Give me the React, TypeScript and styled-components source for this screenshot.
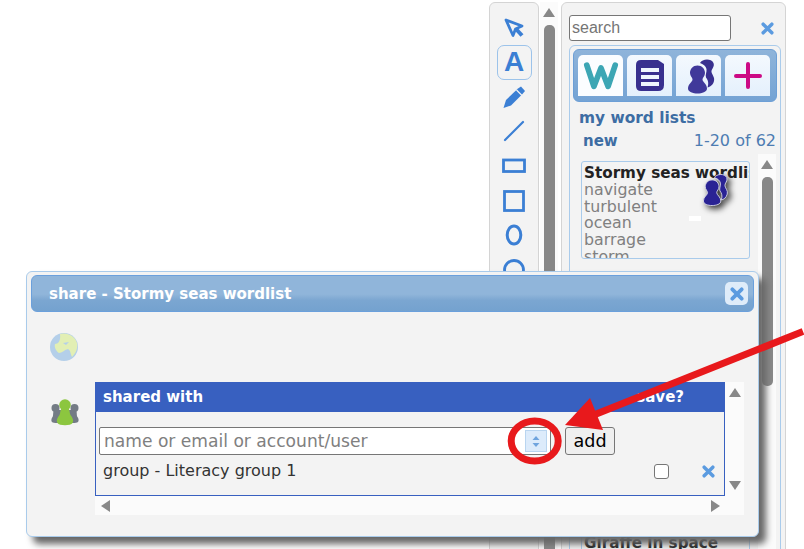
import React from "react";
import styled, { createGlobalStyle } from "styled-components";

const Global = createGlobalStyle`
  html, body { margin: 0; padding: 0; background: #fff; }
  body { font-family: "DejaVu Sans", sans-serif; }
`;

const Page = styled.div`
  position: relative;
  width: 804px;
  height: 549px;
  overflow: hidden;
  background: #fff;
  display: flex;
  padding: 2px 18px 0 489px;
  box-sizing: border-box;
`;

const ToolBox = styled.div`
  width: 50px;
  flex: none;
  height: 600px;
  box-sizing: border-box;
  border: 1px solid #d4d4d4;
  border-radius: 6px;
  background: #f3f3f3;
  padding-top: 7px;
  display: flex;
  flex-direction: column;
  align-items: center;
`;

const Tool = styled.div<{ $active?: boolean }>`
  width: 35px;
  height: 35px;
  flex: none;
  margin-bottom: -0.4px;
  box-sizing: border-box;
  display: flex;
  align-items: center;
  justify-content: center;
  border-radius: 7px;
  border: 1px solid ${(p) => (p.$active ? "#9cc3ea" : "transparent")};
  color: #3b7fd4;
`;

const TextTool = styled.span`
  font: 700 28px/1 "Liberation Sans", Arial, sans-serif;
  color: #3b7fd4;
`;

const VScroll = styled.div<{ $w?: number; $thumbTop: number; $thumbH: number; $pad?: number }>`
  position: relative;
  width: ${(p) => p.$w ?? 18}px;
  flex: none;
  background: #fbfbfb;
  margin-left: ${(p) => p.$pad ?? 1}px;
  &::before {
    content: "";
    position: absolute;
    left: 50%;
    margin-left: -6px;
    top: ${(p) => p.$thumbTop - 17}px;
    border: 6px solid transparent;
    border-top: 0;
    border-bottom: 9px solid #888;
  }
  &::after {
    content: "";
    position: absolute;
    left: 50%;
    margin-left: -5.5px;
    width: 11px;
    top: ${(p) => p.$thumbTop}px;
    height: ${(p) => p.$thumbH}px;
    background: #888;
    border-radius: 5px;
  }
`;

const Panel = styled.div`
  width: 225px;
  flex: none;
  margin-left: 3px;
  height: 600px;
  box-sizing: border-box;
  border: 1px solid #d4d4d4;
  border-radius: 6px 6px 0 0;
  background: #f3f3f3;
  padding: 12px 4px 0 7px;
`;

const SearchRow = styled.div`
  display: flex;
  align-items: center;
  height: 26px;
  margin-bottom: 4px;
`;

const SearchInput = styled.input`
  width: 162px;
  height: 26px;
  box-sizing: border-box;
  border: 1px solid #767676;
  border-radius: 3px;
  background: #fff;
  font: 16px "Liberation Sans", Arial, sans-serif;
  padding: 0 2px;
  &::placeholder { color: #757575; opacity: 1; }
`;

const SearchClear = styled.span`
  display: flex;
  margin-left: 30px;
`;

const Inner = styled.div`
  border: 1px solid #a9cbeb;
  border-radius: 6px 6px 0 0;
  height: 560px;
  box-sizing: border-box;
  padding: 3px 3px 0;
`;

const TabBar = styled.div`
  height: 53px;
  box-sizing: border-box;
  border-radius: 6px;
  background: linear-gradient(#8fb4da, #74a3d4);
  border: 1px solid #6d9fd6;
  display: flex;
  gap: 4px;
  padding: 5px 6px 5px 4px;
`;

const Tab = styled.div<{ $active?: boolean }>`
  flex: 1;
  height: 41px;
  border-radius: 5px 5px 0 0;
  background: ${(p) => (p.$active ? "#fbfdff" : "linear-gradient(#f4f9fe, #e4f0fc)")};
  display: flex;
  align-items: center;
  justify-content: center;
`;

const ListTitle = styled.div`
  font-weight: 700;
  font-size: 15.4px;
  line-height: 18px;
  color: #3d6da3;
  margin: 7px 0 0 6px;
`;

const NewRow = styled.div`
  display: flex;
  justify-content: space-between;
  align-items: baseline;
  margin: 5px 1px 0 10px;
  line-height: 18px;
`;

const NewLink = styled.span`
  font-weight: 700;
  font-size: 15px;
  color: #3d6da3;
`;

const Count = styled.span`
  font-size: 16px;
  color: #4d7cb2;
`;

const ListArea = styled.div`
  display: flex;
  margin: 4px 0 0 8px;
`;

const Cards = styled.div`
  width: 169px;
  flex: none;
  margin-top: 7px;
`;

const Card = styled.div<{ $top?: number }>`
  position: relative;
  height: 98px;
  box-sizing: border-box;
  border: 1px solid #a9cbeb;
  border-radius: 3px;
  margin-top: ${(p) => p.$top ?? 0}px;
  padding-left: 2px;
  overflow: hidden;
`;

const CardTitle = styled.div`
  font-weight: 700;
  font-size: 15.2px;
  line-height: 18px;
  margin-top: 2px;
  color: #222;
  white-space: nowrap;
`;

const CardWord = styled.div`
  font-size: 15.8px;
  line-height: 16.7px;
  color: #808080;
`;

const CardBadge = styled.div`
  position: absolute;
  left: 115px;
  top: 11px;
  display: flex;
  filter: drop-shadow(3px 3px 3px #333);
`;

const Mark = styled.div`
  position: absolute;
  left: 107px;
  top: 54px;
  width: 12px;
  height: 5px;
  background: #fff;
`;

const Modal = styled.div`
  position: absolute;
  left: 26px;
  top: 271px;
  width: 733px;
  height: 266px;
  box-sizing: border-box;
  background: #f3f3f3;
  border: 1px solid #a9cbeb;
  border-radius: 6px;
  box-shadow: 7px 7px 7px #666;
  padding: 3px 4px 0 4px;
`;

const ModalHeader = styled.div`
  height: 37px;
  box-sizing: border-box;
  border: 1px solid #6ba0dc;
  border-radius: 6px;
  background: linear-gradient(#90b5da 0 52%, #7ba6d1 70%, #74a2cf);
  display: flex;
  align-items: center;
  justify-content: space-between;
  padding: 0 5px 0 17px;
  color: #fff;
  font-weight: 700;
  font-size: 15px;
`;

const CloseBtn = styled.div`
  width: 23px;
  height: 23px;
  border-radius: 5px;
  background: #dfecf9;
  display: flex;
  align-items: center;
  justify-content: center;
`;

const ModalBody = styled.div`
  display: flex;
  padding: 18px 0 0 18px;
`;

const IconCol = styled.div`
  width: 46px;
  flex: none;
  display: flex;
  flex-direction: column;
  gap: 36px;
  padding-top: 2px;
`;

const ShareArea = styled.div`
  display: grid;
  grid-template-columns: 630px 19px;
  grid-template-rows: 114px 19px;
  margin-top: 52px;
  background: #fbfbfb;
`;

const ShareBox = styled.div`
  border: 1px solid #3860c0;
  background: #f3f3f3;
  box-sizing: border-box;
`;

const ShareHead = styled.div`
  height: 29px;
  background: #3860c0;
  color: #fff;
  font-weight: 700;
  font-size: 15px;
  line-height: 29px;
  display: flex;
  justify-content: space-between;
  padding: 0 40px 0 7px;
`;

const AddRow = styled.div`
  display: flex;
  align-items: center;
  margin: 15px 0 0 3px;
  gap: 14px;
`;

const InputWrap = styled.div`
  position: relative;
  width: 452px;
  height: 28px;
`;

const NameInput = styled.input`
  width: 100%;
  height: 100%;
  box-sizing: border-box;
  border: 1px solid #767676;
  border-radius: 2px;
  background: #fff;
  font: 17.1px "DejaVu Sans", sans-serif;
  padding: 0 4px;
  &::placeholder { color: #808080; opacity: 1; }
`;

const Spinner = styled.div`
  position: absolute;
  right: 4px;
  top: 3px;
  width: 22px;
  height: 22px;
  box-sizing: border-box;
  background: #dcebfb;
  border: 1px solid #b9d5f0;
  display: flex;
  align-items: center;
  justify-content: center;
`;

const AddBtn = styled.button`
  width: 50px;
  height: 28px;
  box-sizing: border-box;
  border: 1px solid #767676;
  border-radius: 3px;
  background: #efefef;
  color: #000;
  font: 17.6px "DejaVu Sans", sans-serif;
  padding: 0;
`;

const ShareRow = styled.div`
  display: flex;
  align-items: center;
  margin: 5px 0 0 7px;
  height: 20px;
  font-size: 16px;
  color: #333;
`;

const RowName = styled.span`
  flex: 1;
`;

const Check = styled.input.attrs({ type: "checkbox" })`
  width: 15px;
  height: 15px;
  margin: 2px 33px 0 0;
  appearance: none;
  background: #fff;
  border: 1px solid #767676;
  border-radius: 3px;
`;

const RowClear = styled.span`
  display: flex;
  margin: 2px 9px 0 0;
`;

const SideBar = styled.div`
  display: flex;
  flex-direction: column;
  justify-content: space-between;
  align-items: center;
  padding: 6px 0 6px;
`;

const BottomBar = styled.div`
  display: flex;
  justify-content: space-between;
  align-items: center;
  padding: 0 5px 0 6px;
`;

const Annotation = styled.svg`
  position: absolute;
  left: 0;
  top: 0;
  pointer-events: none;
`;

const Xmark = ({ size = 13, color = "#5b9be0" }: { size?: number; color?: string }) => (
  <svg width={size} height={size} viewBox="0 0 12 12">
    <path d="M2 2 L10 10 M10 2 L2 10" stroke={color} strokeWidth="3.2" strokeLinecap="round" />
  </svg>
);

const People = ({ size = 36, back = "#38308f", front = "#40399a", edge = "none" }: { size?: number; back?: string; front?: string; edge?: string }) => (
  <svg width={size} height={size} viewBox="0 0 36 36">
    <path d="M19 5 C21 1 30 0 32.5 5 C34 9 30 11 30.5 14 C31 17 34 19 33 23 C32 27 29 29 26.5 29.5 C28 25 27 22 25 19.5 C24 17 26 14 25.5 11 C25 8 22 6 19 5 Z" fill={back} stroke={edge} />
    <path d="M16.5 7.5 C21 7.5 24 11 24 15 C24 18 21.5 19.5 21.5 21.5 C21.5 24 26 26 26 30.5 C26 34 21 35.5 16.5 35.5 C12 35.5 7 34 7 30.5 C7 26 11.5 24 11.5 21.5 C11.5 19.5 9 18 9 15 C9 11 12 7.5 16.5 7.5 Z" fill={front} stroke={edge} />
  </svg>
);

const Arrow = ({ dir }: { dir: "up" | "down" | "left" | "right" }) => {
  const pts = {
    up: "0,9 6,0 12,9",
    down: "0,0 12,0 6,9",
    left: "9,0 9,12 0,6",
    right: "0,0 0,12 9,6",
  }[dir];
  const w = dir === "up" || dir === "down" ? 12 : 9;
  const h = dir === "up" || dir === "down" ? 9 : 12;
  return (
    <svg width={w} height={h} viewBox={`0 0 ${w} ${h}`}>
      <polygon points={pts} fill="#888" />
    </svg>
  );
};

const toolIcons = [
  <svg key="c" width="22" height="22" viewBox="0 0 22 22" fill="none" stroke="currentColor" strokeLinejoin="round"><path d="M3 3 L19 9 L12.500 12 L10 18.500 Z" strokeWidth="2.800" /><path d="M13 12 L19 18.500" strokeWidth="4" /></svg>,
  <TextTool key="a">A</TextTool>,
  <svg key="p" width="24" height="24" viewBox="0 0 24 24"><path d="M1.500 23 L4 15 L16 3.500 L19 1.500 L23 6 L20.500 9 L9 20.500 Z" fill="currentColor" /><path d="M14.500 5 L20 10.500" stroke="#f3f3f3" strokeWidth="1.200" /></svg>,
  <svg key="l" width="22" height="22" viewBox="0 0 22 22"><path d="M2 20 L20 2" stroke="currentColor" strokeWidth="2.200" strokeLinecap="round" /></svg>,
  <svg key="r" width="24" height="16" viewBox="0 0 24 16" fill="none"><rect x="1.500" y="2" width="21" height="11.500" stroke="currentColor" strokeWidth="2.800" /></svg>,
  <svg key="s" width="22" height="22" viewBox="0 0 22 22" fill="none"><rect x="1.500" y="1.500" width="19" height="19" stroke="currentColor" strokeWidth="2.800" /></svg>,
  <svg key="e" width="18" height="22" viewBox="0 0 18 22" fill="none"><ellipse cx="9" cy="11" rx="6.800" ry="9" stroke="currentColor" strokeWidth="3" /></svg>,
  <svg key="o" width="22" height="22" viewBox="0 0 22 22" fill="none"><circle cx="11" cy="11" r="9.500" stroke="currentColor" strokeWidth="2.800" /></svg>,
];

export default function App() {
  return (
    <Page>
      <Global />
      <ToolBox>
        {toolIcons.map((icon, i) => (
          <Tool key={i} $active={i === 1}>{icon}</Tool>
        ))}
      </ToolBox>
      <VScroll $thumbTop={23} $thumbH={600} />
      <Panel>
        <SearchRow>
          <SearchInput placeholder="search" />
          <SearchClear><Xmark /></SearchClear>
        </SearchRow>
        <Inner>
          <TabBar>
            <Tab $active>
              <svg width="36" height="30" viewBox="0 0 38 30" fill="none"><path d="M4 3.500 L11.500 26 L19 6.500 L26.500 26 L34 3.500" stroke="#3ca6b4" strokeWidth="6" strokeLinecap="round" strokeLinejoin="round" /></svg>
            </Tab>
            <Tab>
              <svg width="28" height="31" viewBox="0 0 28 31"><path d="M5 0 H22 L28 4 V25 Q28 31 22 31 H5 Q0 31 0 26 V5 Q0 0 5 0Z" fill="#38308f" /><path d="M5 10 H23 M5 17 H23 M5 24 H23" stroke="#eef5fd" strokeWidth="4" /></svg>
            </Tab>
            <Tab><People /></Tab>
            <Tab>
              <svg width="28" height="28" viewBox="0 0 28 28"><path d="M14 2 V25 M2 14 H26" stroke="#cc0a85" strokeWidth="4" strokeLinecap="round" /></svg>
            </Tab>
          </TabBar>
          <ListTitle>my word lists</ListTitle>
          <NewRow>
            <NewLink>new</NewLink>
            <Count>1-20 of 62</Count>
          </NewRow>
          <ListArea>
            <Cards>
              <Card>
                <CardTitle>Stormy seas wordlist</CardTitle>
                <CardWord>navigate</CardWord>
                <CardWord>turbulent</CardWord>
                <CardWord>ocean</CardWord>
                <CardWord>barrage</CardWord>
                <CardWord>storm</CardWord>
                <CardBadge><People size={33} back="#2a2394" front="#2a2394" edge="#d8d8e8" /></CardBadge>
                <Mark />
              </Card>
              <Card $top={272}>
                <CardTitle>Giraffe in space</CardTitle>
              </Card>
            </Cards>
            <VScroll $thumbTop={23} $thumbH={209} $pad={8} />
          </ListArea>
        </Inner>
      </Panel>

      <Modal>
        <ModalHeader>
          share - Stormy seas wordlist
          <CloseBtn><Xmark size={14} /></CloseBtn>
        </ModalHeader>
        <ModalBody>
          <IconCol>
            <svg width="30" height="30" viewBox="0 0 30 30">
              <circle cx="15" cy="15" r="14" fill="#b4cfe9" />
              <path d="M11 2 C18 0 26 4 28 11 C29 16 27 21 23 25 C21 21 22 19 19 17 C15 18 13 21 10 21 C7 19 5 15 6 12 C9 12 12 9 11 2Z" fill="#e2efb4" />
              <path d="M14 11 L20 10 L17 13Z" fill="#b4cfe9" />
            </svg>
            <svg width="32" height="28" viewBox="0 0 32 28">
              <circle cx="6.500" cy="10" r="4" fill="#737b85" />
              <circle cx="25.500" cy="10" r="4" fill="#737b85" />
              <path d="M6.500 12 C3 12 5 17 3.500 19 C1.500 22 2 25 6.500 25 H25.500 C30 25 30.500 22 28.500 19 C27 17 29 12 25.500 12Z" fill="#737b85" />
              <circle cx="16" cy="7" r="5.800" fill="#8cc63f" />
              <path d="M16 9 C10.500 9 12 14 10.500 17 C8.500 20 7 22 8.500 25 C10 28 22 28 23.500 25 C25 22 23.500 20 21.500 17 C20 14 21.500 9 16 9Z" fill="#8cc63f" />
            </svg>
          </IconCol>
          <ShareArea>
            <ShareBox>
              <ShareHead>
                <span>shared with</span>
                <span>save?</span>
              </ShareHead>
              <AddRow>
                <InputWrap>
                  <NameInput placeholder="name or email or account/user" />
                  <Spinner>
                    <svg width="8" height="11" viewBox="0 0 8 11"><path d="M4 0 L7.500 4 H.5Z M4 11 L7.500 7 H.5Z" fill="#6fa4de" /></svg>
                  </Spinner>
                </InputWrap>
                <AddBtn>add</AddBtn>
              </AddRow>
              <ShareRow>
                <RowName>group - Literacy group 1</RowName>
                <Check />
                <RowClear><Xmark /></RowClear>
              </ShareRow>
            </ShareBox>
            <SideBar>
              <Arrow dir="up" />
              <Arrow dir="down" />
            </SideBar>
            <BottomBar>
              <Arrow dir="left" />
              <Arrow dir="right" />
            </BottomBar>
          </ShareArea>
        </ModalBody>
      </Modal>

      <Annotation width="804" height="549" viewBox="0 0 804 549">
        <ellipse cx="534.700" cy="441" rx="23.500" ry="20" fill="none" stroke="#e8191c" strokeWidth="7" />
        <path d="M803 331.500 L590 416.500" stroke="#e8191c" strokeWidth="7" fill="none" />
        <polygon points="565,425 590,398 603,430" fill="#e8191c" />
      </Annotation>
    </Page>
  );
}
